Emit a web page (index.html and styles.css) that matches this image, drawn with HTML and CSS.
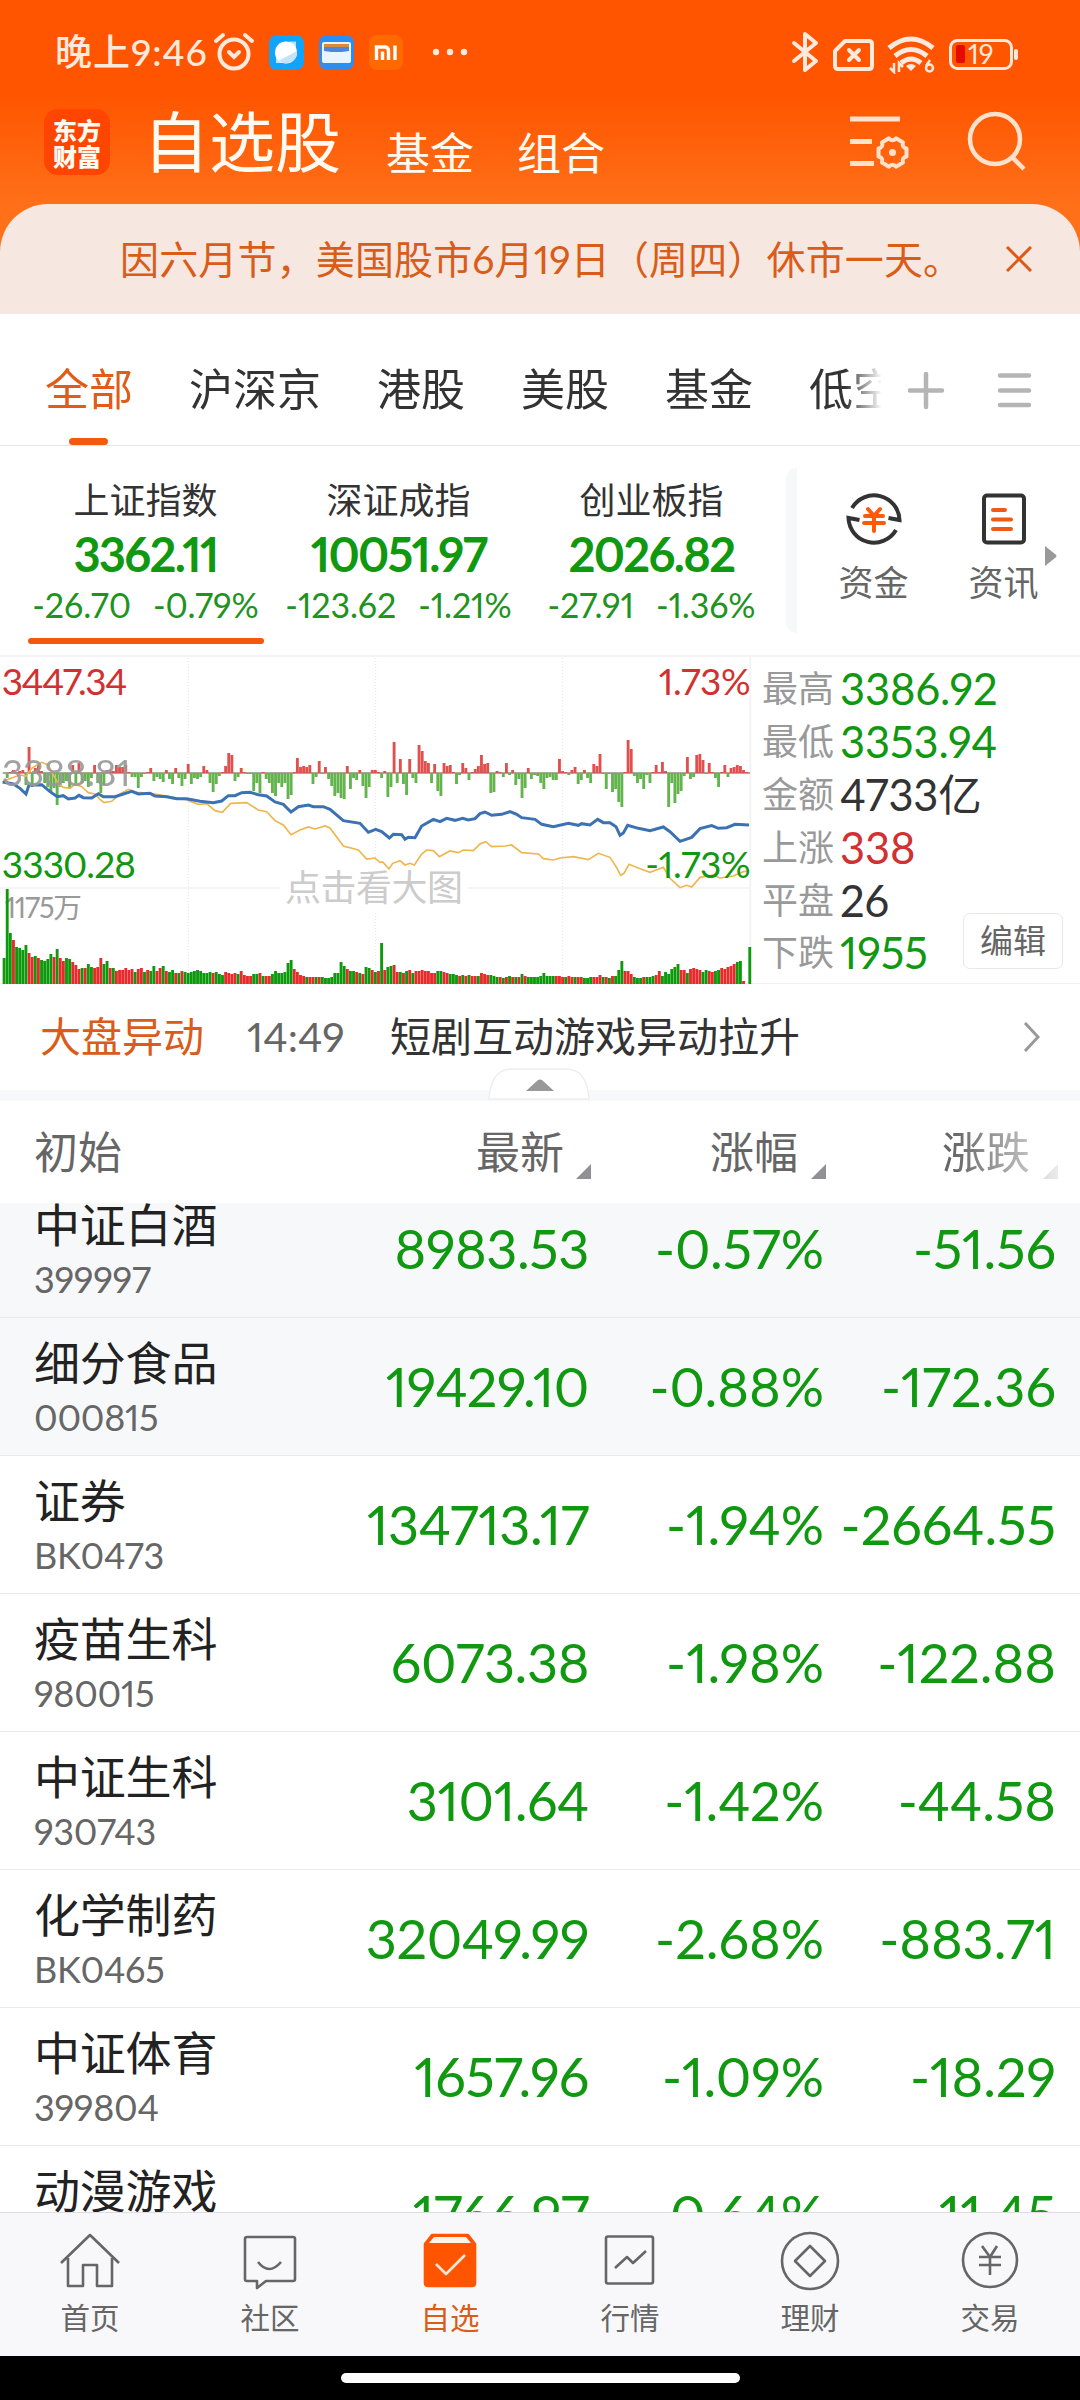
FILE: index.html
```
<!DOCTYPE html>
<html lang="zh-CN">
  <head>
    <meta charset="UTF-8">
    <title>自选股</title>
    <link rel="stylesheet" href="styles.css">
  </head>
  <body>
    <div class="top">
      <div class="status-bar">
        <span class="clock">晚上9:46</span>
        <svg class="alarm" width="42" height="40" viewBox="0 0 42 40" fill="none" stroke="#ffe9dc" stroke-width="4" stroke-linecap="round">
          <circle cx="21" cy="22" r="14.5"/>
          <path d="M3 9l7-6M39 9l-7-6M16 20l5 5 5-5"/>
        </svg>
        <svg class="app" width="35" height="35" viewBox="0 0 35 35">
          <rect width="35" height="35" rx="8" fill="#12a4fb"/>
          <circle cx="17" cy="17.500" r="11" fill="#fff"/>
          <path d="M20 6.500h7v8zM7 20v8h8z" fill="#fff" opacity=".7"/>
          <path d="M28 16a11 11 0 0 1-18 9.500z" fill="#c5e2fb"/>
        </svg>
        <svg class="app" width="35" height="35" viewBox="0 0 35 35">
          <rect width="35" height="35" rx="8" fill="#2d8df2"/>
          <rect x="3" y="7" width="29" height="21" rx="2" fill="#eaf4ff"/>
          <path d="M5 9h25v7l-7 1H12l-7-1z" fill="#4a88dd"/>
          <path d="M5 9h25v3H5z" fill="#d98a3c"/>
        </svg>
        <svg class="app" width="34" height="35" viewBox="0 0 34 35">
          <rect width="34" height="35" rx="8" fill="#ff6a00"/>
          <path d="M7.500 25V12h8q4 0 4 4v9M13.500 16.500V25M26 10.500V25" fill="none" stroke="#fff" stroke-width="3.400"/>
        </svg>
        <svg class="dots" width="36" height="8" viewBox="0 0 36 8" fill="#ffe9dc">
          <circle cx="4" cy="4" r="3.200"/><circle cx="18" cy="4" r="3.200"/><circle cx="32" cy="4" r="3.200"/>
        </svg>
        <svg class="system" width="232" height="44" viewBox="0 0 232 44" fill="none" stroke="#ffe9dc">
          <path d="M4 13l22 18-11 9V4l11 9L4 31" stroke-width="4" stroke-linejoin="round" stroke-linecap="round"/>
          <path d="M55 11h24q3 0 3 3v22q0 3-3 3H48q-3 0-3-3V21z" stroke-width="4" stroke-linejoin="round"/>
          <path d="M59 20l10 10M69 20l-10 10" stroke-width="4" stroke-linecap="round"/>
          <path d="M99 18q22-18 44 0M105 26q16-13 32 0M111 33q10-8 20 0" stroke-width="5"/>
          <path d="M116 36q5-4 10 0l-5 5z" fill="#ffe9dc" stroke="none"/>
          <path d="M104 33v9l-4-4M109 42v-9l4 4" stroke-width="2.500"/>
          <circle cx="139.500" cy="38" r="3.500" stroke-width="2.500"/>
          <path d="M140 30l-4 6" stroke-width="2.500"/>
          <rect x="160.500" y="10.500" width="61" height="28" rx="7" stroke-width="3"/>
          <rect x="166" y="15" width="9" height="18" rx="2" fill="#e60b00" stroke="none"/>
          <path d="M226 21v7" stroke-width="4" stroke-linecap="round"/>
          <text x="178" y="33.500" class="battery">19</text>
        </svg>
      </div>
      <div class="header">
        <div class="logo">东方<br>财富</div>
        <div class="title">自选股</div>
        <div class="link">基金</div>
        <div class="link">组合</div>
        <svg class="header-icons" width="178" height="64" viewBox="0 0 178 64" fill="none" stroke="#ffe1cc">
          <path d="M0 11h50M0 33.500h22M0 55.500h24" stroke-width="5"/>
          <path d="M14-4V4Q9 5.200 10.500 10.100L3.500 14.200Q0 10.400-3.500 14.200L-10.500 10.100Q-9 5.200-14 4V-4Q-9-5.200-10.500-10.100L-3.500-14.200Q0-10.400 3.500-14.200L10.500-10.100Q9-5.200 14-4z" transform="translate(42.500 44.500)" stroke-width="4" stroke-linejoin="round"/>
          <circle cx="42.500" cy="44.500" r="3.500" fill="#ffe1cc" stroke="none"/>
          <circle cx="145" cy="31" r="25" stroke-width="4.500"/>
          <path d="M161 48l13 13" stroke-width="4.500"/>
        </svg>
      </div>
      <div class="notice">
        <span>因六月节，美国股市6月19日（周四）休市一天。</span>
        <svg width="26" height="26" viewBox="0 0 26 26" stroke="#dc5a16" stroke-width="3"><path d="M1 1l24 24M25 1L1 25"/></svg>
      </div>
    </div>

    <div class="tabs">
      <div class="tab-list">
        <div class="tab active">全部</div>
        <div class="tab">沪深京</div>
        <div class="tab">港股</div>
        <div class="tab">美股</div>
        <div class="tab">基金</div>
        <div class="tab">低空</div>
      </div>
      <svg width="124" height="40" viewBox="0 0 124 40" stroke="#b5b5b5" stroke-width="4.500" stroke-linecap="round">
        <path d="M2 20.500h32M18 4v33M92 5.500h29M92 20.500h29M92 35h29"/>
      </svg>
    </div>

    <div class="indices">
      <div class="index active">
        <div class="index-name">上证指数</div>
        <div class="index-value">3362.11</div>
        <div class="index-change"><span>-26.70</span><span>-0.79%</span></div>
      </div>
      <div class="index">
        <div class="index-name">深证成指</div>
        <div class="index-value">10051.97</div>
        <div class="index-change"><span>-123.62</span><span>-1.21%</span></div>
      </div>
      <div class="index">
        <div class="index-name">创业板指</div>
        <div class="index-value">2026.82</div>
        <div class="index-change"><span>-27.91</span><span>-1.36%</span></div>
      </div>
      <div class="shortcuts">
        <div class="shortcut">
          <svg width="56" height="56" viewBox="0 0 56 56" fill="none" stroke="#333" stroke-width="4">
            <path d="M6 17a25.500 25.500 0 0 1 47.500 12l-11-2M50 39A25.500 25.500 0 0 1 2.500 27l11 2"/>
            <path d="M22 18l6 7 6-7M19 25h18M18 32h20M28 25v15" stroke="#ff5a0a" stroke-linecap="round"/>
          </svg>
          资金
        </div>
        <div class="shortcut">
          <svg width="56" height="56" viewBox="0 0 56 56" fill="none" stroke="#333" stroke-width="4">
            <rect x="8" y="4.500" width="40" height="47" rx="3"/>
            <path d="M17 19h12M17 28.500h18M17 38h18" stroke="#f05a14" stroke-linecap="round"/>
          </svg>
          资讯
        </div>
        <svg class="more" width="12" height="20" viewBox="0 0 12 20"><path d="M0 0l10 8q3 2 0 4L0 20z" fill="#999"/></svg>
      </div>
    </div>

    <div class="market">
      <svg class="chart" width="752" height="330" viewBox="0 15 2256 990">
        <path d="M565 24V1000M1127 24V1000M1688 24V1000" stroke="#e4e4e6" stroke-width="3" stroke-dasharray="3 6"/>
        <path d="M0 714H2250M0 1001H2250M2251 18V1001" stroke="#f2f2f3" stroke-width="5"/>
        <path d="M8 369H2250" stroke="#8a8f80" stroke-width="4"/>
        <text class="volume-label" x="14" y="804" textLength="232">1175万</text>
        <g id="delta"></g>
        <g id="volume"></g>
        <rect x="840" y="640" width="564" height="148" fill="#fff"/>
        <text class="watermark" x="855" y="753" textLength="534">点击看大图</text>
        <polyline id="average" fill="none" stroke="#efb64d" stroke-width="5"/>
        <polyline id="price" fill="none" stroke="#3b72b4" stroke-width="9"/>
        <text class="label gray" x="5" y="408" textLength="387">3388.81</text>
        <text class="label red" x="5" y="134" textLength="377">3447.34</text>
        <text class="label red" x="1976" y="134" textLength="276">1.73%</text>
        <text class="label green" x="5" y="684" textLength="403">3330.28</text>
        <text class="label green" x="1936" y="684" textLength="316">-1.73%</text>
      </svg>
      <div class="stats">
        <div class="stat"><span>最高</span><b class="green">3386.92</b></div>
        <div class="stat"><span>最低</span><b class="green">3353.94</b></div>
        <div class="stat"><span>金额</span><b>4733亿</b></div>
        <div class="stat"><span>上涨</span><b class="red">338</b></div>
        <div class="stat"><span>平盘</span><b>26</b></div>
        <div class="stat"><span>下跌</span><b class="green">1955</b></div>
        <div class="edit">编辑</div>
      </div>
    </div>

    <div class="news">
      <span class="news-tag">大盘异动</span>
      <span class="news-time">14:49</span>
      <span class="news-title">短剧互动游戏异动拉升</span>
      <svg width="18" height="30" viewBox="0 0 18 30" fill="none" stroke="#999" stroke-width="3"><path d="M2 1l13 14L2 29"/></svg>
    </div>
    <div class="divider">
      <svg width="102" height="32" viewBox="0 0 102 32">
        <path d="M1 31Q3 1 24 1H78Q99 1 101 31z" fill="#fff" stroke="#eeeef0" stroke-width="1.500"/>
        <path d="M38 23L50 12q2-1 4 0L66 23z" fill="#999"/>
      </svg>
    </div>

    <div class="columns">
      <div>初始</div>
      <div class="sort">最新</div>
      <div class="sort">涨幅</div>
      <div class="sort last">涨跌</div>
    </div>
    <div class="table">
      <div class="row pinned"><div class="name">中证白酒<small>399997</small></div><div>8983.53</div><div>-0.57%</div><div>-51.56</div></div>
      <div class="row pinned"><div class="name">细分食品<small>000815</small></div><div>19429.10</div><div>-0.88%</div><div>-172.36</div></div>
      <div class="row"><div class="name">证券<small>BK0473</small></div><div>134713.17</div><div>-1.94%</div><div>-2664.55</div></div>
      <div class="row"><div class="name">疫苗生科<small>980015</small></div><div>6073.38</div><div>-1.98%</div><div>-122.88</div></div>
      <div class="row"><div class="name">中证生科<small>930743</small></div><div>3101.64</div><div>-1.42%</div><div>-44.58</div></div>
      <div class="row"><div class="name">化学制药<small>BK0465</small></div><div>32049.99</div><div>-2.68%</div><div>-883.71</div></div>
      <div class="row"><div class="name">中证体育<small>399804</small></div><div>1657.96</div><div>-1.09%</div><div>-18.29</div></div>
      <div class="row"><div class="name">动漫游戏</div><div>1766.97</div><div>-0.64%</div><div>-11.45</div></div>
    </div>

    <div class="nav">
      <div class="nav-item">
        <svg width="60" height="60" viewBox="0 0 60 60"><path d="M1 32L30 4l29 28M8 27v28h15V34h14v21h15V27"/></svg>
        首页
      </div>
      <div class="nav-item">
        <svg width="60" height="60" viewBox="0 0 60 60"><path d="M7 6h46q2 0 2 2v40q0 2-2 2H26l-9 7v-7H7q-2 0-2-2V8q0-2 2-2zM18 31q11 14 23 0"/></svg>
        社区
      </div>
      <div class="nav-item active">
        <svg width="60" height="60" viewBox="0 0 60 60">
          <path d="M5 13l7-9h36l7 9v39q0 3-3 3H8q-3 0-3-3z" fill="#ff5500"/>
          <path d="M9 12l5-6h32l5 6z" fill="#fff3ea" stroke="none"/>
          <path d="M16 33l10 10 19-19" stroke="#ffe7d8"/>
        </svg>
        自选
      </div>
      <div class="nav-item">
        <svg width="60" height="60" viewBox="0 0 60 60"><rect x="6" y="5.500" width="47" height="47" rx="2"/><path d="M15 37l12-11 6 6 13-12"/></svg>
        行情
      </div>
      <div class="nav-item">
        <svg width="60" height="60" viewBox="0 0 60 60"><circle cx="30" cy="30" r="28"/><path d="M30 15l15 15-15 15-15-15z"/></svg>
        理财
      </div>
      <div class="nav-item">
        <svg width="60" height="60" viewBox="0 0 60 60"><circle cx="30" cy="29" r="27"/><path d="M22 15l8 11 7-11M19 26h22M19 34h22M30 26v18"/></svg>
        交易
      </div>
    </div>
    <div class="home-bar"><div></div></div>

    <script src="script.js"></script>
  </body>
</html>
```
FILE: styles.css
```
body {
  margin: 0;
  width: 1080px;
  height: 2400px;
  overflow: hidden;
  background: #fff;
  color: #333;
  font-family: Lato, "Noto Sans CJK SC", sans-serif;
  font-variant-numeric: proportional-nums;
}
svg {
  display: block;
  flex: none;
}
.red {
  color: #d03232;
  fill: #d03232;
}
.green {
  color: #109810;
  fill: #109810;
}

/* top */
.top {
  background: linear-gradient(#ff5500 95px, #ff7019 205px);
}
.status-bar {
  display: flex;
  align-items: center;
  height: 104px;
  padding-left: 55px;
  color: #ffe9dc;
}
.clock {
  width: 158px;
  font-size: 37px;
  line-height: 102px;
  letter-spacing: 1px;
  white-space: nowrap;
  font-weight: 500;
}
.app {
  margin-left: 14px;
}
.app + .app {
  margin-left: 15px;
}
.dots {
  margin-left: 29px;
}
.system {
  margin-left: auto;
  margin-right: 58px;
}
.battery {
  font-size: 27px;
  fill: #ffe9dc;
  stroke: none;
}
.header {
  display: flex;
  height: 100px;
  padding-left: 44px;
  color: #fffaf2;
}
.logo {
  width: 66px;
  height: 57px;
  padding-top: 9px;
  margin-top: 5px;
  border-radius: 14px;
  background: #ff4500;
  font-size: 24px;
  line-height: 26px;
  font-weight: 900;
  text-align: center;
}
.title {
  margin-left: 33px;
  width: 200px;
  font-size: 66px;
  line-height: 76px;
}
.link {
  margin-left: 43px;
  width: 88px;
  font-size: 44px;
  line-height: 98px;
}
.header-icons {
  margin-top: 4px;
  margin-left: 245px;
}
.notice {
  display: flex;
  align-items: center;
  justify-content: space-between;
  height: 110px;
  padding: 0 48px 0 120px;
  border-radius: 48px 48px 0 0;
  background: #f6e7e0;
  color: #d95c18;
  font-size: 39px;
}
.notice span {
  padding-bottom: 4px;
  letter-spacing: 0.150px;
}

/* tabs */
.tabs {
  display: flex;
  height: 131px;
  border-bottom: 1px solid #e4e4e6;
}
.tabs > svg {
  margin-top: 56px;
}
.tab-list {
  display: flex;
  gap: 56px;
  width: 836px;
  height: 131px;
  padding-left: 45px;
  margin-right: 27px;
  overflow: hidden;
  -webkit-mask-image: linear-gradient(to right, #000 845px, transparent 882px);
  mask-image: linear-gradient(to right, #000 845px, transparent 882px);
}
.tab {
  flex: none;
  font-size: 44px;
  line-height: 151px;
}
.tab.active {
  position: relative;
  color: #e05c18;
}
.tab.active::after {
  content: "";
  position: absolute;
  left: 24px;
  top: 124px;
  width: 39px;
  height: 7px;
  border-radius: 4px;
  background: #f25a0f;
}

/* indices */
.indices {
  display: flex;
  height: 209px;
  padding-left: 19px;
}
.index {
  width: 253px;
  height: 198px;
  text-align: center;
  white-space: nowrap;
}
.index.active::after {
  content: "";
  display: block;
  width: 236px;
  height: 6px;
  margin: 12px auto 0;
  border-radius: 3px;
  background: #f4590b;
}
.index-name {
  margin-top: 28px;
  font-size: 36px;
  line-height: 52px;
}
.index-value {
  font-size: 47px;
  line-height: 56px;
  letter-spacing: -1.700px;
  font-weight: 700;
  color: #109810;
}
.index-change {
  display: flex;
  justify-content: center;
  gap: 22px;
  font-size: 34px;
  line-height: 43px;
  padding-top: 1px;
  letter-spacing: -0.100px;
  color: #1e931e;
}
.shortcuts {
  display: flex;
  width: 282px;
  height: 165px;
  margin-top: 22px;
  margin-left: 8px;
  border-left: 11px solid #f7f8fa;
  border-radius: 10px 0 0 10px;
}
.shortcut {
  width: 131px;
  padding-left: 11px;
  padding-top: 23px;
  font-size: 35px;
  line-height: 70px;
  text-align: center;
  color: #666;
}
.shortcut + .shortcut {
  width: 129px;
  padding-left: 0;
}
.shortcut svg {
  margin: 0 auto;
}
.more {
  margin-top: 78px;
  margin-left: -23px;
}

/* market */
.market {
  display: flex;
  height: 329px;
  border-top: 2px solid #f3f3f5;
  border-bottom: 1px solid #f0f0f2;
  box-sizing: border-box;
}
.chart {
  margin-top: -2px;
}
.label {
  font-size: 111px;
}
.gray {
  fill: #999;
  opacity: 0.900;
}
.volume-label {
  font-size: 86px;
  fill: #999;
}
.watermark {
  font-size: 108px;
  fill: #ccc;
}
.stats {
  position: relative;
  flex: 1;
  padding-top: 5px;
  padding-left: 10px;
}
.stat {
  display: flex;
  align-items: center;
  height: 52.800px;
  font-size: 36px;
  line-height: 52px;
  color: #999;
}
.stat b {
  margin-left: 6px;
  font-size: 43.500px;
  font-weight: 400;
  letter-spacing: -0.100px;
}
.stat b:not([class]) {
  color: #333;
}
.stat .red {
  color: #d03232;
}
.stat .green {
  color: #109810;
}
.edit {
  position: absolute;
  right: 17px;
  bottom: 14px;
  width: 98px;
  height: 54px;
  border: 1px solid #e8e8ea;
  border-radius: 7px;
  background: #fff;
  font-size: 33px;
  line-height: 53px;
  text-align: center;
  color: #666;
}

/* news */
.news {
  display: flex;
  align-items: center;
  height: 106px;
  padding-left: 40px;
  font-size: 41px;
  line-height: 102px;
}
.news span {
  padding-bottom: 1px;
}
.news-tag {
  color: #d95c18;
}
.news-time {
  width: 143px;
  margin-left: 43px;
  color: #666;
}
.news svg {
  margin-left: auto;
  margin-right: 39px;
}
.divider {
  height: 11px;
  background: #f7f8fa;
}
.divider svg {
  position: relative;
  top: -22px;
  left: 488px;
}

/* table */
.columns, .row {
  display: grid;
  grid-template-columns: 290px 264px 235px 235px;
  padding-left: 34px;
}
.columns {
  height: 102px;
  font-size: 44px;
  line-height: 103px;
  color: #666;
}
.sort {
  position: relative;
  padding-right: 25px;
  text-align: right;
}
.sort:nth-child(2) {
  padding-right: 24px;
}
.sort::after {
  content: "";
  position: absolute;
  right: -3px;
  bottom: 25px;
  border-left: 15px solid transparent;
  border-bottom: 15px solid #919195;
}
.sort.last {
  padding-right: 28px;
  -webkit-mask-image: linear-gradient(to right, #000 130px, rgba(0, 0, 0, 0.150) 240px);
  mask-image: linear-gradient(to right, #000 130px, rgba(0, 0, 0, 0.150) 240px);
}
.sort.last::after {
  right: 0;
}
.table {
  display: flex;
  flex-direction: column;
  height: 1009px;
  overflow: hidden;
}
.row {
  flex: none;
  box-sizing: border-box;
  height: 138px;
  border-bottom: 1px solid #e9e9ec;
  font-size: 54px;
  line-height: 137px;
  text-align: right;
  color: #109810;
}
.row > div:nth-child(2) {
  margin-right: -1px;
  letter-spacing: -0.400px;
}
.row > div:nth-child(3) {
  margin-right: -1px;
}
.row > div:nth-child(4) {
  margin-right: 2px;
}
.row:first-child {
  margin-top: -23px;
}
.row.pinned {
  background: #f7f8fa;
}
.row .name {
  padding-top: 12px;
  font-size: 46px;
  line-height: 66px;
  letter-spacing: -0.200px;
  text-align: left;
  color: #222;
}
.name small {
  display: block;
  font-size: 36px;
  line-height: 42px;
  letter-spacing: -0.300px;
  color: #666;
}

/* bottom nav */
.nav {
  display: flex;
  box-sizing: border-box;
  height: 144px;
  border-top: 1px solid #dedee2;
  background: #f8f8fb;
}
.nav-item {
  width: 180px;
  padding-top: 18px;
  font-size: 29.500px;
  line-height: 54px;
  text-align: center;
  color: #666;
}
.nav-item svg {
  margin: 0 auto;
  fill: none;
  stroke: #666;
  stroke-width: 2.600px;
  stroke-linejoin: round;
}
.nav-item.active {
  color: #d95c18;
}
.nav-item.active svg {
  stroke: #ff5500;
}
.home-bar {
  height: 44px;
  background: #000;
}
.home-bar div {
  position: relative;
  top: 17px;
  width: 399px;
  height: 10px;
  margin: 0 auto;
  border-radius: 5px;
  background: #fff;
}
```
FILE: script.js
```
// Minute data, one value per bar. Above zero is red, below zero is green.
var delta = [
  0, -5, 1, 3, 1, 2, 3, -12, 26, -14, 5, 8, 2, -10, -14, -20, -15, -32, -14, -10, -8, -16, 8, -12, 10, -10, -8, -14, -5, 8,
  -10, -20, -12, 3, 3, 2, 8, 6, 6, 8, 1, -4, -4, -15, -4, -1, 1, 5, -8, -4, -6, -9, 3, -6, -11, 5, -5, -13, -6, 9,
  -11, -5, -6, -4, 7, 3, -10, -19, -11, -3, 1, 7, 20, 18, -8, -4, 5, 1, -1, -1, -18, -10, -20, 1, -6, -10, -20, -23, -10, -14,
  -10, -26, -22, 1, 15, 6, 7, 6, 8, -11, -4, 12, -1, 6, -6, -13, -23, -20, -25, -26, 7, -16, -5, -7, 3, -13, -25, -14, 3, 3,
  1, -5, 2, -24, -14, 31, -10, 14, -11, -22, 14, -5, -10, 28, 22, 12, 10, -10, 9, -18, -23, 10, 7, 8, 1, -11, -2, 10, 5, -7,
  1, 4, 7, 18, 9, 10, -20, -19, 2, 1, -4, 10, -2, 3, -12, -6, -25, -15, 5, -6, -2, -3, -10, -16, -5, -4, -7, -7, 14, 2,
  1, -2, 3, 6, -11, -7, 3, -5, -10, 9, 7, 19, -1, -16, -1, -19, -16, -29, -34, 1, 33, 24, -3, -10, -6, -16, -2, -10, 1, 8,
  1, 11, 2, -34, -10, -30, -21, -18, -3, 16, -6, -4, 18, 19, 13, -1, 10, 1, -5, -14, 1, 8, -4, 5, 6, 8, 7, 3, 1
];
var volume = [
  -26, -95, -51, 44, -37, -36, -34, -39, 31, 27, -28, 26, -24, -23, -25, -30, 27, -35, 26, 23, -26, -25, 22, 19, 15, -16, 16, -20, -17, 16,
  17, 26, -20, -23, 16, -16, 13, 14, 14, 16, 14, 15, -12, 15, 16, -12, 14, -13, -18, 13, 16, -18, 13, -12, -14, 11, -11, 13, -12, -11,
  -12, -13, -14, -13, -11, -11, -12, 11, -12, -10, -9, 12, 11, 10, 11, -10, 13, 9, 8, 8, -10, -10, 11, -8, 8, 8, -10, -13, -11, -11,
  -12, -21, -24, 15, 12, 9, 8, -7, 7, 7, -7, 7, -7, -6, -6, -7, -11, -11, -22, -18, 15, -13, -13, 12, -11, 10, -17, -16, 14, -12,
  13, -41, 14, -17, -18, 19, 12, -12, 11, -13, 14, -11, 13, 13, 14, 13, 13, 11, 11, -13, -13, 12, 11, -10, -10, -9, 8, -9, 8, -9,
  8, 8, -8, 11, 10, 9, -9, -8, -7, 7, -6, 7, -8, 7, -7, 7, -10, 8, -7, -7, -7, -7, -8, -11, -8, -8, -8, 8, 8, 7,
  -7, 8, 7, -7, 7, 7, -6, -6, -7, 7, 7, 9, -7, 7, -6, 8, -8, -14, -23, 13, 13, 10, -7, -6, -6, 7, -7, -7, -8, 9,
  13, -8, -12, -10, -15, -17, -20, 14, 14, -11, 15, 16, 15, 14, -12, -14, 13, 12, -13, -14, 16, 15, 17, 18, 20, -22, -23, 3, 0, -37
];

var price = '8,396 40,402 60,415 78,432 87,405 125,404 150,425 172,440 190,437 205,447 225,444 237,436 250,443 275,444 295,431 310,440 345,440 395,424 415,432 450,430 465,438 500,440 530,446 560,446 600,454 640,458 665,453 685,437 705,437 725,428 750,427 775,434 800,438 825,456 850,463 873,486 895,470 925,465 940,470 970,470 990,478 1030,512 1080,520 1105,547 1127,538 1145,545 1168,564 1180,553 1205,554 1215,568 1225,562 1245,563 1265,528 1300,508 1320,515 1340,505 1365,511 1388,505 1405,510 1425,506 1440,491 1455,486 1475,496 1505,493 1530,485 1550,493 1565,503 1605,508 1625,523 1660,530 1705,520 1735,526 1745,521 1770,525 1793,508 1810,518 1830,518 1848,530 1860,556 1870,549 1883,526 1915,535 1950,542 1990,531 2010,545 2040,574 2075,562 2100,536 2135,527 2155,535 2180,533 2205,523 2247,525';
var average = '8,396 25,388 60,375 78,378 95,355 125,337 145,345 160,375 175,402 190,412 210,415 225,402 245,410 265,428 285,432 300,448 312,458 335,454 360,432 385,418 410,427 450,430 500,438 560,450 595,463 620,461 645,482 667,487 692,460 740,458 775,480 800,485 825,512 850,525 873,554 900,540 925,531 945,537 975,528 990,534 1030,588 1075,600 1100,627 1125,624 1140,637 1148,636 1167,657 1178,640 1200,632 1215,645 1230,640 1243,645 1265,612 1280,600 1300,602 1318,620 1350,603 1375,608 1390,600 1420,602 1440,582 1457,575 1475,590 1515,588 1535,585 1565,608 1615,612 1630,626 1660,630 1680,624 1720,620 1765,629 1795,610 1830,622 1850,653 1862,676 1872,670 1887,643 1920,656 1950,667 1990,652 2010,685 2040,713 2060,706 2075,711 2100,682 2140,675 2160,684 2200,678 2230,665 2247,663';

var STEP = 9.36;

function drawBars(id, data, base, red, green, hang) {
  var group = document.getElementById(id);
  data.forEach(function (v, i) {
    var h = Math.abs(v) * 3;
    var bar = document.createElementNS('http://www.w3.org/2000/svg', 'rect');
    bar.setAttribute('x', 8 + i * STEP);
    bar.setAttribute('y', hang && v < 0 ? base : base - h);
    bar.setAttribute('width', 8.6);
    bar.setAttribute('height', h);
    bar.setAttribute('fill', v > 0 ? red : green);
    group.appendChild(bar);
  });
}

drawBars('delta', delta, 369, '#e0504e', '#62b44c', true);
drawBars('volume', volume, 1002, '#e82a2a', '#0c9a0c', false);
document.getElementById('price').setAttribute('points', price);
document.getElementById('average').setAttribute('points', average);
```
